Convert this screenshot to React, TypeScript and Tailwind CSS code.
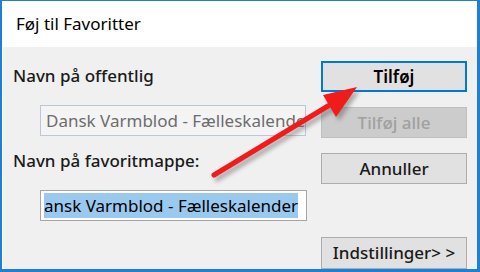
import React from 'react';

const font = { fontFamily: '"Noto Sans", "Open Sans", sans-serif' };

const Arrow: React.FC = () => (
  <svg className="absolute inset-0 pointer-events-none" width="480" height="272" viewBox="0 0 480 272">
    <defs>
      <filter id="sh" x="-20%" y="-20%" width="140%" height="140%">
        <feGaussianBlur stdDeviation="2" />
      </filter>
    </defs>
    <g transform="translate(3,4)" opacity="0.45" filter="url(#sh)">
      <line x1="212" y1="174" x2="326" y2="105" stroke="#555" strokeWidth="5" strokeLinecap="round" />
      <polygon points="355,86 321,94 334,116" fill="#555" />
    </g>
    <line x1="212" y1="174" x2="326" y2="105" stroke="#f21b1b" strokeWidth="5" strokeLinecap="round" />
    <polygon points="355,86 321,94 334,116" fill="#f21b1b" />
  </svg>
);

export default function App() {
  return (
    <div
      style={font}
      className="relative w-[480px] h-[272px] overflow-hidden bg-white border-[#1f7fd4] border-l-2 border-t border-r-[3px] border-b-[3px] flex flex-col"
    >
      <div className="h-[46px] shrink-0 bg-white flex items-center pl-[14px] text-[17px] text-black">
        Føj til Favoritter
      </div>
      <div className="flex-1 bg-[#f0f0f0] border-l border-white flex overflow-hidden">
        <div className="w-[318px] shrink-0 flex flex-col pl-[10px]">
          <div className="mt-[19px] h-[20px] leading-[20px] text-[17px] font-medium text-[#1a1a1a]">
            Navn på offentlig
          </div>
          <div className="mt-[19px] ml-[27px] w-[266px] h-[31px] border border-[#b9c7d8] bg-[#f4f4f4] flex items-center pl-[5px] overflow-hidden whitespace-nowrap text-[17px] text-[#6d6d6d]">
            Dansk Varmblod - Fælleskalender
          </div>
          <div className="mt-[15px] h-[20px] leading-[20px] text-[17px] font-medium text-[#1a1a1a]">
            Navn på favoritmappe:
          </div>
          <div className="mt-[19px] ml-[27px] w-[267px] h-[31px] border border-[#a6a6a6] bg-white flex items-center pl-[3px] overflow-hidden whitespace-nowrap text-[17px] text-black">
            <span className="bg-[#99c9ef] leading-[25px]">ansk Varmblod - Fælleskalender</span>
          </div>
        </div>
        <div className="w-[146px] shrink-0 flex flex-col text-[17px]">
          <button className="mt-[14px] h-[32px] border-2 border-[#0078d7] bg-[#e1e1e1] font-semibold text-black">
            Tilføj
          </button>
          <button className="mt-[15px] h-[32px] border border-[#bfbfbf] bg-[#cccccc] font-medium text-[#a0a0a0]">
            Tilføj alle
          </button>
          <button className="mt-[15px] h-[32px] border border-[#adadad] bg-[#e1e1e1] font-medium text-[#1a1a1a]">
            Annuller
          </button>
          <button className="mt-[53px] h-[32px] shrink-0 border border-[#adadad] bg-[#e1e1e1] font-medium text-[#1a1a1a]">
            Indstillinger&gt; &gt;
          </button>
        </div>
      </div>
      <Arrow />
    </div>
  );
}
